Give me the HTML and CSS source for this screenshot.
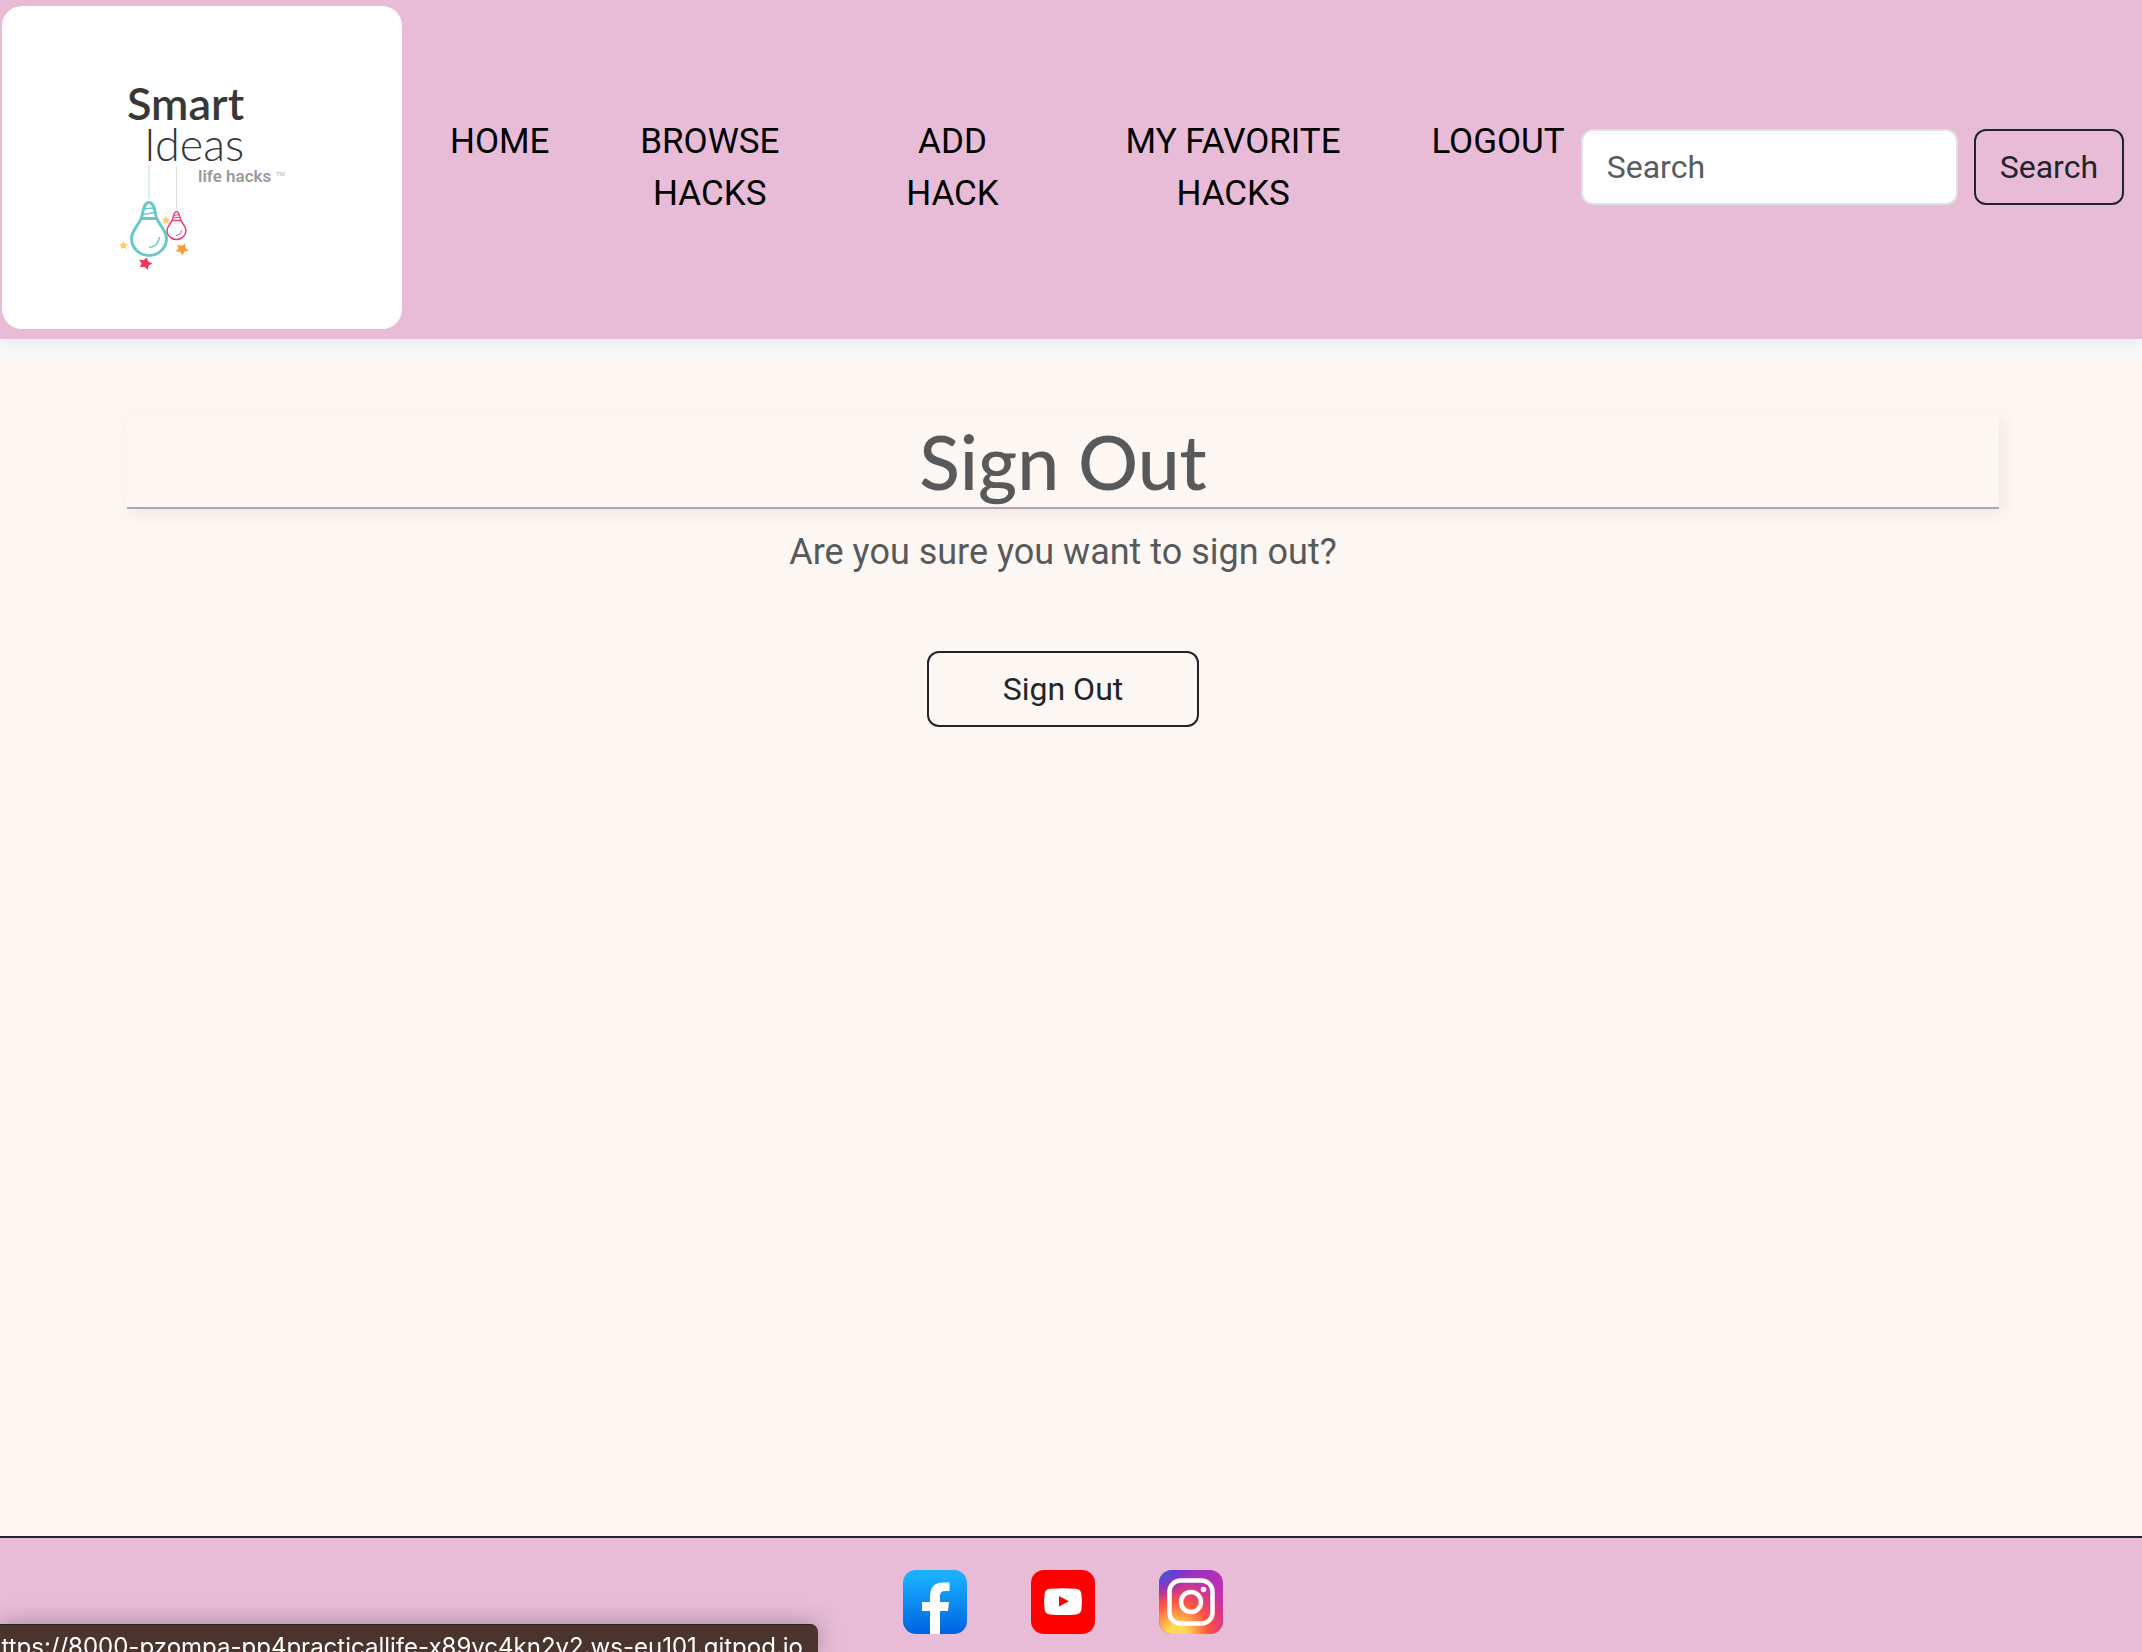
FILE: index.html
```html
<!DOCTYPE html>
<html lang="en">
<head>
<meta charset="utf-8">
<meta name="viewport" content="width=device-width, initial-scale=1">
<title>Smart Ideas - Sign Out</title>
<link rel="stylesheet" href="styles.css">
</head>
<body>
<header class="header">
  <a class="logo" href="#" aria-label="Smart Ideas life hacks">
    <svg class="logo-art" viewBox="0 0 400 323" aria-hidden="true">
      <text class="logo-smart" x="125" y="114">Smart</text>
      <text class="logo-ideas" x="142" y="155">Ideas</text>
      <text class="logo-tag" x="196" y="176">life hacks</text>
      <text class="logo-tm" x="274" y="170">TM</text>
      <path d="M147 159V193" stroke="#d9f1f5" stroke-width="2"/>
      <path d="M174.500 160V203" stroke="#dedede" stroke-width="1.200"/>
      <g fill="none" stroke="#69c8c9" stroke-width="3" stroke-linejoin="round">
        <path d="M139.500 212C141 205 142 196.500 147 196.500S153 205 154.500 212C158 220 164.500 225 164.500 232.500A17.500 17 0 0 1 129.500 232.500C129.500 225 136 220 139.500 212Z"/>
        <path d="M139 212.500H155"/>
        <path d="M142 203L151 202M141 208.500L153 206.500" stroke-width="1.500"/>
        <path d="M147 241.500Q156 241 157.500 231" stroke-width="1.500"/>
      </g>
      <g fill="none" stroke="#ee3e6d" stroke-width="1.500" stroke-linejoin="round">
        <path d="M170.500 213.500C171.500 210 172 205.500 174.500 205.500S177.500 210 178.500 213.500C180 218 184 220 184 224.500A9.500 9 0 0 1 165 224.500C165 220 169 218 170.500 213.500Z"/>
        <path d="M170 214.500H179"/>
        <path d="M172 209.500L177 208.500M171.500 212L178 211" stroke-width="1"/>
        <path d="M174 229.500Q179 229 179.500 224.500" stroke-width="1"/>
      </g>
      <path fill="#ffcb66" d="M164 210l1.300 2.600 2.900.3-2.100 2 .6 3-2.700-1.400-2.700 1.400.6-3-2.100-2 2.900-.3z"/>
      <path fill="#ffcb66" d="M121.500 235l1.300 2.800 3 .3-2.200 2.100.7 3-2.800-1.500-2.800 1.500.7-3-2.200-2.100 3-.3z"/>
      <path fill="#f99a33" d="M175 238.500l4.500 1.200 4-2 .1 4.300 3 2.800-4.400 1-1.800 3.800-2.100-3.900-4.900-.2 3.200-3z"/>
      <path fill="#ef3558" d="M144.500 251.500l1.700 4.100 4.300 1.900-3.900 2-.8 4.500-3.300-3.200-4.700.3 1.700-3.700-2.400-3.800 4.600.7z"/>
    </svg>
  </a>
  <nav class="nav" aria-label="Main">
    <a class="nav-link" href="#">HOME</a>
    <a class="nav-link" href="#">BROWSE<br>HACKS</a>
    <a class="nav-link nav-link-wide" href="#">ADD<br>HACK</a>
    <a class="nav-link" href="#">MY FAVORITE<br>HACKS</a>
    <a class="nav-link" href="#">LOGOUT</a>
  </nav>
  <form class="search" role="search">
    <input class="search-input" type="search" placeholder="Search" aria-label="Search">
    <button class="btn" type="button">Search</button>
  </form>
</header>
<main class="main">
  <h1 class="title">Sign Out</h1>
  <p class="question">Are you sure you want to sign out?</p>
  <button class="btn btn-signout" type="button">Sign Out</button>
</main>
<footer class="footer">
  <a class="social" href="#" aria-label="Facebook">
    <svg viewBox="0 0 64 64" aria-hidden="true">
      <defs><linearGradient id="fb" x2="0" y2="1"><stop offset=".1" stop-color="#19afff"/><stop offset="1" stop-color="#0062e0"/></linearGradient></defs>
      <rect width="64" height="64" rx="13" fill="url(#fb)"/>
      <path fill="#fff" d="M27 64V41H19V32H27V27Q27 12.500 40 12.500H46.500V21H42Q37 21 37 26V32H46L45 41H37V64Z"/>
    </svg>
  </a>
  <a class="social" href="#" aria-label="YouTube">
    <svg viewBox="0 0 64 64" aria-hidden="true">
      <rect width="64" height="64" rx="13" fill="#f00"/>
      <path fill="#fff" d="M19 18.800Q32 17.500 45 18.800Q49.800 19.300 50.400 24Q51.500 32 50.400 39.500Q49.800 44 45 44.500Q32 45.600 19 44.500Q14.200 44 13.600 39.500Q12.500 32 13.600 24Q14.200 19.300 19 18.800Z"/>
      <path fill="#f00" d="M28 26L38 31.300L28 36.500Z"/>
    </svg>
  </a>
  <a class="social" href="#" aria-label="Instagram">
    <svg viewBox="0 0 64 64" aria-hidden="true">
      <defs>
        <linearGradient id="ig-base" x1="0" y1="0" x2="1" y2=".3"><stop stop-color="#5b4fd0"/><stop offset=".6" stop-color="#a12fc0"/><stop offset="1" stop-color="#c12fb4"/></linearGradient>
        <radialGradient id="ig-warm" cx=".28" cy="1" r="1"><stop stop-color="#ffdd55"/><stop offset=".15" stop-color="#ffd755"/><stop offset=".5" stop-color="#ff543e"/><stop offset=".75" stop-color="#e23a78" stop-opacity=".8"/><stop offset="1" stop-color="#c837ab" stop-opacity="0"/></radialGradient>
        <radialGradient id="ig-blue" cx="0" cy="0" r=".5"><stop stop-color="#3771c8"/><stop offset="1" stop-color="#6600ff" stop-opacity="0"/></radialGradient>
      </defs>
      <rect width="64" height="64" rx="13" fill="url(#ig-base)"/>
      <rect width="64" height="64" rx="13" fill="url(#ig-warm)"/>
      <rect width="64" height="64" rx="13" fill="url(#ig-blue)"/>
      <g fill="none" stroke="#fff" stroke-width="4.500">
        <rect x="10.500" y="10.500" width="43" height="43" rx="11"/>
        <circle cx="32" cy="32" r="10"/>
      </g>
      <circle cx="44.500" cy="19.500" r="2.800" fill="#fff"/>
    </svg>
  </a>
</footer>
<div class="status">https://8000-pzompa-pp4practicallife-x89vc4kn2v2.ws-eu101.gitpod.io</div>
</body>
</html>
```
FILE: styles.css
```css
* {
  box-sizing: border-box;
}

body {
  margin: 0;
  min-height: 100vh;
  display: flex;
  flex-direction: column;
  background: #f8f9fa;
  font-family: Roboto, "Liberation Sans", sans-serif;
  font-size: 35px;
  line-height: 52px;
  color: #212529;
}

.header {
  display: flex;
  align-items: center;
  padding: 6px 18px 10px 2px;
  margin-bottom: 16px;
  background: #e8bcd7;
  box-shadow: 0 4px 16px rgba(0, 0, 0, 0.08);
}

.logo {
  flex: none;
  width: 400px;
  border-radius: 20px;
  background: #fff;
}

.logo-art {
  display: block;
  width: 100%;
}

.logo-smart,
.logo-ideas {
  font-family: Lato, sans-serif;
  font-size: 45px;
  fill: #383838;
}

.logo-smart {
  font-weight: 600;
}

.logo-ideas {
  font-weight: 300;
}

.logo-tag {
  font-family: Roboto, "Liberation Sans", sans-serif;
  font-size: 17px;
  font-weight: 600;
  fill: #9b9b9b;
}

.logo-tm {
  font-family: "Liberation Sans", sans-serif;
  font-size: 6px;
  fill: #b5a5a5;
}

.nav {
  flex: 1;
  display: flex;
  justify-content: space-between;
  margin: 0 16px 0 48px;
}

.nav-link {
  color: #000;
  text-align: center;
  text-decoration: none;
  white-space: nowrap;
}

.nav-link-wide {
  padding: 0 36px;
}

.search {
  display: flex;
  gap: 16px;
  padding-bottom: 2px;
}

.search-input,
.btn {
  height: 76px;
  margin: 0;
  padding: 0 24px;
  border: 2px solid #212529;
  border-radius: 12px;
  background: transparent;
  color: #212529;
  font: 400 32px/48px Roboto, "Liberation Sans", sans-serif;
}

.search-input {
  width: 377px;
  border-color: #dee2e6;
  background: #fff;
  appearance: none;
}

.search-input::placeholder {
  color: #595c5f;
  opacity: 1;
}

.main {
  position: relative;
  flex: 1;
  display: flex;
  flex-direction: column;
  align-items: center;
  padding: 60px 143px 60px 127px;
  background: #fdf7f3;
  color: #58595b;
}

.title {
  width: 100%;
  margin: 0;
  border-bottom: 2px solid #b3a5b5;
  box-shadow: 4px 4px 16px rgba(80, 30, 20, 0.08);
  font-family: Lato, sans-serif;
  font-size: 75px;
  font-weight: 500;
  line-height: 92px;
  text-align: center;
}

.question {
  margin: 17px 0 73px;
  font-size: 36px;
}

.btn-signout {
  width: 272px;
}

.footer {
  display: flex;
  justify-content: center;
  gap: 64px;
  padding: 32px 16px 18px 0;
  border-top: 2px solid #212529;
  background: #e8bcd7;
}

.social,
.social svg {
  display: block;
  width: 64px;
  height: 64px;
}

.status {
  position: fixed;
  left: 0;
  bottom: 0;
  display: flex;
  justify-content: flex-end;
  width: 818px;
  height: 28px;
  padding: 4px 15px 0 0;
  overflow: hidden;
  border-top: 1px solid #2b2424;
  border-radius: 0 8px 0 0;
  background: #4b332e;
  box-shadow: 0 0 24px rgba(0, 0, 0, 0.3);
  color: #fff;
  font-family: Inter, sans-serif;
  font-size: 24px;
  line-height: 36px;
  white-space: nowrap;
}
```
